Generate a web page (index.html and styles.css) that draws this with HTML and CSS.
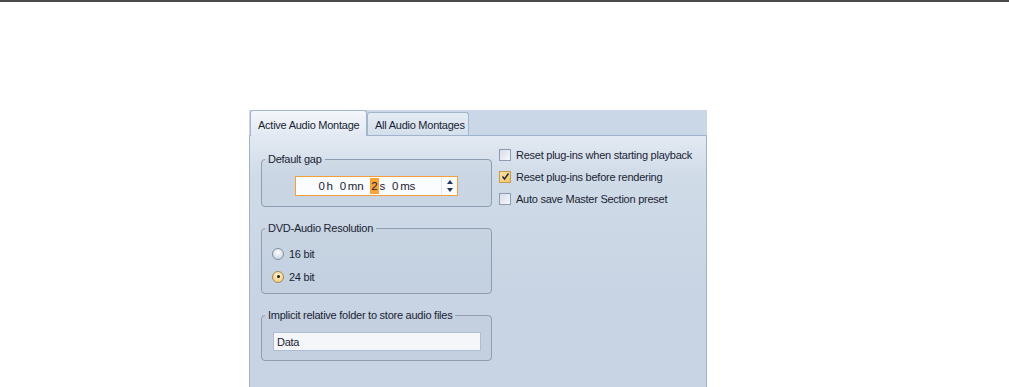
FILE: index.html
```html
<!DOCTYPE html>
<html lang="en">
<head>
    <meta charset="UTF-8">
    <title>Audio Montage Preferences</title>
    <link rel="stylesheet" href="styles.css">
</head>
<body>
    <div class="topbar"></div>
    <div class="dialog">
        <div class="tabs">
            <div class="tab active">Active Audio Montage</div>
            <div class="tab">All Audio Montages</div>
        </div>
        <div class="panel">
            <div class="left-col">
                <fieldset class="group group-gap">
                    <legend>Default gap</legend>
                    <div class="time-field">
                        <div class="time-value">
                            <span class="num">0</span><span class="unit">h</span>
                            <span class="num">0</span><span class="unit">mn</span>
                            <span class="num sel">2</span><span class="unit">s</span>
                            <span class="num">0</span><span class="unit">ms</span>
                        </div>
                        <div class="spin">
                            <span class="arrow up"></span>
                            <span class="arrow down"></span>
                        </div>
                    </div>
                </fieldset>
                <fieldset class="group group-res">
                    <legend>DVD-Audio Resolution</legend>
                    <div class="radio-row">
                        <span class="radio"></span> 16 bit
                    </div>
                    <div class="radio-row">
                        <span class="radio checked"></span> 24 bit
                    </div>
                </fieldset>
                <fieldset class="group group-folder">
                    <legend>Implicit relative folder to store audio files</legend>
                    <div class="text-input">Data</div>
                </fieldset>
            </div>
            <div class="right-col">
                <div class="check-row"><span class="check"></span>Reset plug-ins when starting playback</div>
                <div class="check-row"><span class="check checked">
                    <svg width="9" height="9" viewBox="0 0 9 9"><path d="M1.5 4.5 L3.5 7 L7.5 1.5" fill="none" stroke="#1b2a3c" stroke-width="1.4"/></svg>
                </span>Reset plug-ins before rendering</div>
                <div class="check-row"><span class="check"></span>Auto save Master Section preset</div>
            </div>
        </div>
    </div>
</body>
</html>
```

FILE: styles.css
```css
body {
    margin: 0;
    font-family: "Liberation Sans", Arial, sans-serif;
    font-size: 11px;
    letter-spacing: -0.25px;
    color: #1a2433;
    background: #fff;
    overflow: hidden;
    height: 387px;
}
.topbar {
    height: 2px;
    background: #4a4a4a;
}
.dialog {
    margin: 108px 0 0 249px;
    width: 458px;
    background: #c9d7e7;
}
.tabs {
    display: flex;
    align-items: flex-end;
    height: 25px;
    padding-left: 1px;
}
.tab {
    box-sizing: border-box;
    height: 23px;
    width: 102px;
    padding: 6px 0 0 7px;
    border: 1px solid #a3b6cc;
    border-bottom: none;
    border-radius: 3px 3px 0 0;
    background: linear-gradient(#e4ebf4, #d3dfec);
    white-space: nowrap;
}
.tab.active {
    height: 26px;
    width: 117px;
    margin-bottom: -1px;
    padding: 8px 0 0 7px;
    background: linear-gradient(#f4f7fb, #e2e9f2);
    position: relative;
    z-index: 1;
}
.panel {
    box-sizing: border-box;
    height: 270px;
    border: 1px solid #9fb3cb;
    background: linear-gradient(#e2e9f2, #d0dbe8 40px, #c8d4e3 160px, #c8d4e3);
    display: flex;
    padding: 17px 0 0 11px;
}
.left-col {
    width: 231px;
}
.group {
    box-sizing: border-box;
    margin: 0;
    padding: 0;
    border: 1px solid #8e9db1;
    border-radius: 4px;
    background: rgba(180, 195, 212, 0.18);
}
.group legend {
    padding: 0 3px;
    margin-left: 3px;
    line-height: 13px;
}
.group-gap {
    height: 54px;
}
.group-res {
    height: 72px;
    margin-top: 15px;
}
.group-folder {
    height: 52px;
    margin-top: 15px;
}
.time-field {
    box-sizing: border-box;
    display: flex;
    width: 163px;
    height: 20px;
    margin: 10px 0 0 33px;
    border: 1px solid #f2a037;
    background: #fbfcfe;
}
.time-value {
    flex: 1;
    display: flex;
    align-items: center;
    justify-content: flex-end;
    padding-right: 26px;
    font-size: 11.5px;
}
.time-value .num {
    margin-left: 7px;
    line-height: 14px;
}
.time-value .num:first-child {
    margin-left: 0;
}
.time-value .unit {
    margin-left: 2px;
}
.time-value .sel {
    background: #f7a33a;
    padding: 1px 1px;
    margin-right: -1px;
}
.spin {
    width: 15px;
    border-left: 1px solid #dfe6ee;
    display: flex;
    flex-direction: column;
    align-items: center;
    justify-content: center;
    gap: 4px;
}
.arrow {
    width: 0;
    height: 0;
    border-left: 3.5px solid transparent;
    border-right: 3.5px solid transparent;
}
.arrow.up {
    border-bottom: 4px solid #1f3a5c;
}
.arrow.down {
    border-top: 4px solid #1f3a5c;
}
.radio-row {
    display: flex;
    align-items: center;
    height: 13px;
    margin: 12px 0 0 10px;
    gap: 5px;
}
.radio-row + .radio-row {
    margin-top: 10px;
}
.radio {
    box-sizing: border-box;
    width: 12px;
    height: 12px;
    border-radius: 50%;
    border: 1px solid #7d8ea3;
    background: radial-gradient(circle at 50% 30%, #ffffff, #c4cfdc);
    position: relative;
}
.radio.checked {
    background: radial-gradient(circle at 50% 35%, #fff3d0, #f6c36a);
    border-color: #a58a57;
}
.radio.checked::after {
    content: "";
    position: absolute;
    left: 3.5px;
    top: 3.5px;
    width: 3px;
    height: 3px;
    border-radius: 50%;
    background: #1a1a1a;
}
.text-input {
    box-sizing: border-box;
    width: 208px;
    height: 19px;
    margin: 10px 0 0 11px;
    border: 1px solid #aebdd0;
    background: #f5f6fa;
    padding: 2px 3px 0;
    line-height: 14px;
}
.right-col {
    margin: -5px 0 0 7px;
}
.check-row {
    display: flex;
    align-items: center;
    height: 13px;
    margin-bottom: 9px;
    white-space: nowrap;
}
.check {
    box-sizing: border-box;
    width: 12px;
    height: 12px;
    margin-right: 5px;
    border: 1px solid #8b9bb0;
    background: linear-gradient(135deg, #d5dde7, #f7f9fc);
    display: flex;
    align-items: center;
    justify-content: center;
}
.check.checked {
    border-color: #c49a4f;
    background: linear-gradient(135deg, #fbe3a8, #f7c566);
}
```
